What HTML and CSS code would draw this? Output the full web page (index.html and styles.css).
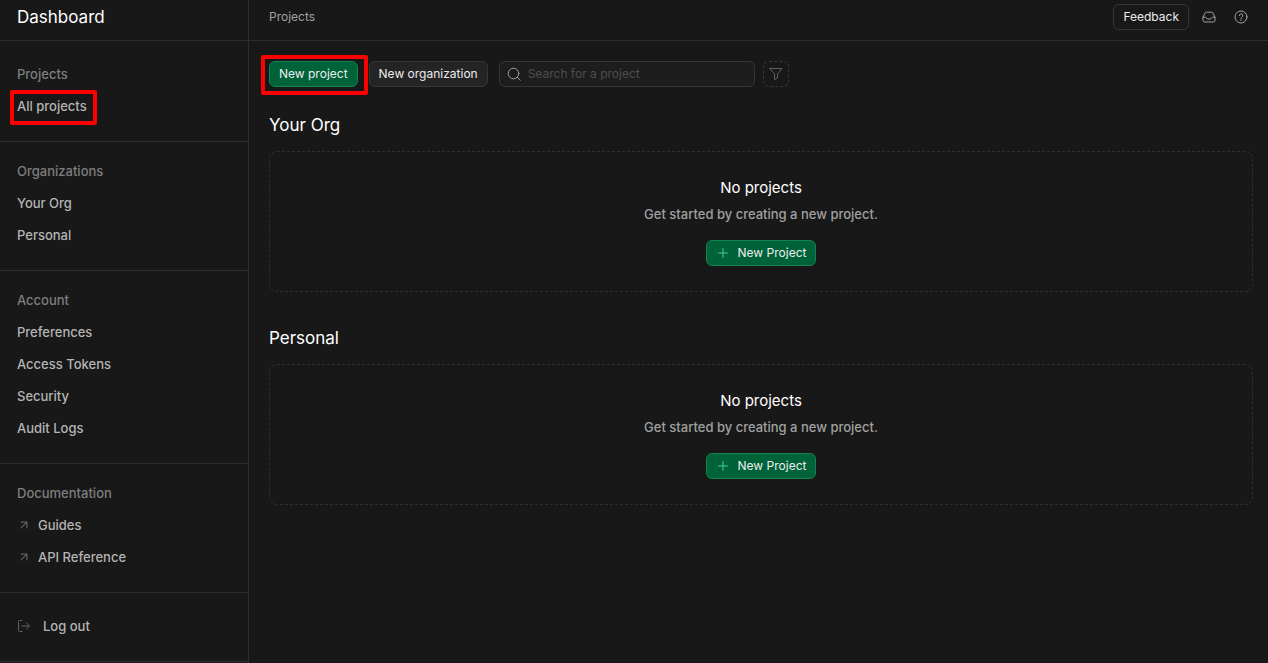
FILE: index.html
```html
<!DOCTYPE html>
<html lang="en">
<head>
<meta charset="utf-8">
<meta name="viewport" content="width=device-width, initial-scale=1">
<title>Projects</title>
<link rel="stylesheet" href="styles.css">
</head>
<body>
<div class="app">
  <aside class="sidebar">
    <div class="brand"><h1>Dashboard</h1></div>
    <nav>
      <section class="group group-edge">
        <h3>Projects</h3>
        <a href="#all"><span class="marked">All projects</span></a>
      </section>
      <section class="group">
        <h3>Organizations</h3>
        <a href="#org">Your Org</a>
        <a href="#personal">Personal</a>
      </section>
      <section class="group">
        <h3>Account</h3>
        <a href="#preferences">Preferences</a>
        <a href="#tokens">Access Tokens</a>
        <a href="#security">Security</a>
        <a href="#logs">Audit Logs</a>
      </section>
      <section class="group">
        <h3>Documentation</h3>
        <a class="doc" href="#guides"><svg viewBox="0 0 24 24"><path d="M7 17 17 7M7 7h10v10"/></svg>Guides</a>
        <a class="doc" href="#api"><svg viewBox="0 0 24 24"><path d="M7 17 17 7M7 7h10v10"/></svg>API Reference</a>
      </section>
      <section class="group group-edge">
        <button class="logout" type="button"><svg viewBox="0 0 14 14"><path d="M5 1.500H2.500a1 1 0 0 0-1 1v9a1 1 0 0 0 1 1H5M5 7h7.500M9.500 4l3 3-3 3"/></svg>Log out</button>
      </section>
    </nav>
  </aside>
  <div class="page">
    <header class="topbar">
      <a class="crumb" href="#projects">Projects</a>
      <div class="actions">
        <button class="btn outline" type="button">Feedback</button>
        <button class="icon-btn" type="button" aria-label="Inbox"><svg viewBox="0 0 14 14"><path d="M1 7.500 3 3q.4-.8 1.300-.8h5.400q.9 0 1.300.8l2 4.500v3q0 1.500-1.500 1.500h-9Q1 12 1 10.500zM1 7.200h2.600Q4.600 9.200 7 9.200t3.400-2H13"/></svg></button>
        <button class="icon-btn" type="button" aria-label="Help"><svg viewBox="0 0 14 14"><circle cx="7" cy="7" r="6"/><path d="M5.300 5.600a1.750 1.750 0 1 1 2.500 1.600q-.8.400-.8 1.200M7 9.700v.8"/></svg></button>
      </div>
    </header>
    <main>
      <div class="toolbar">
        <span class="marked-btn"><button class="btn green" type="button">New project</button></span>
        <button class="btn" type="button">New organization</button>
        <label class="search"><svg viewBox="0 0 14 14"><circle cx="6.500" cy="6.500" r="5.300"/><path d="m10.300 10.300 2.900 2.900"/></svg><input type="text" aria-label="Search for a project" placeholder="Search for a project"></label>
        <button class="filter" type="button" aria-label="Filter"><svg viewBox="0 0 14 14"><path d="M1 1.500h12L8.500 7.200V11l-3 1.700V7.200z"/></svg></button>
      </div>
      <section class="org">
        <h2>Your Org</h2>
        <div class="empty">
          <h4>No projects</h4>
          <p>Get started by creating a new project.</p>
          <button class="btn green add" type="button"><svg viewBox="0 0 14 14"><path d="M7 2.500v9M2.500 7h9"/></svg>New Project</button>
        </div>
      </section>
      <section class="org">
        <h2>Personal</h2>
        <div class="empty">
          <h4>No projects</h4>
          <p>Get started by creating a new project.</p>
          <button class="btn green add" type="button"><svg viewBox="0 0 14 14"><path d="M7 2.500v9M2.500 7h9"/></svg>New Project</button>
        </div>
      </section>
    </main>
  </div>
</div>
</body>
</html>
```
FILE: styles.css
```css
* { box-sizing: border-box; }
body {
  margin: 0;
  background: #181818;
  color: #ededed;
  font: 500 13px/20px Inter, "Liberation Sans", sans-serif;
}
h1, h2, h3, h4, p { margin: 0; font-weight: 400; }
a { color: inherit; text-decoration: none; }
button { font: inherit; color: inherit; }
svg {
  display: block;
  flex: none;
  width: 14px;
  height: 14px;
  fill: none;
  stroke: currentColor;
  stroke-width: 1;
  stroke-linecap: round;
  stroke-linejoin: round;
}
.app { display: flex; min-height: 100vh; }

.sidebar {
  flex: none;
  width: 249px;
  border-right: 1px solid #2e2e2e;
}
.brand {
  display: flex;
  align-items: center;
  height: 41px;
  padding: 0 17px 6px;
  border-bottom: 1px solid #2e2e2e;
}
.brand h1 { color: #fff; font-size: 17px; line-height: 24px; }
.group {
  padding: 13px 17px 19px;
  border-bottom: 1px solid #2e2e2e;
}
.group-edge { padding-top: 17px; }
.group h3 { color: #7e7e7e; font-size: 13px; font-weight: 500; line-height: 32px; }
.group a { display: block; color: #b4b4b4; line-height: 32px; }
.marked { position: relative; }
.marked::after {
  content: "";
  position: absolute;
  inset: -8px -10px -11px -7px;
  border: 4px solid #f00;
  border-radius: 2px;
}
.group .doc { display: flex; align-items: center; gap: 7px; }
.doc svg { color: #606060; stroke-width: 2; }
.logout {
  display: flex;
  align-items: center;
  gap: 12px;
  height: 32px;
  padding: 0;
  border: 0;
  background: none;
  color: #b4b4b4;
}
.logout svg { color: #606060; }

.page { flex: 1; min-width: 0; }
.topbar {
  display: flex;
  align-items: center;
  justify-content: space-between;
  height: 41px;
  padding: 0 20px 6px;
  border-bottom: 1px solid #2e2e2e;
}
.crumb { color: #a0a0a0; font-size: 12px; font-weight: 400; }
.actions { display: flex; align-items: center; gap: 13px; }
.icon-btn {
  padding: 0;
  border: 0;
  background: none;
  color: #a0a0a0;
}
.icon-btn + .icon-btn { margin-left: 5px; }
.btn {
  display: flex;
  align-items: center;
  justify-content: center;
  height: 26px;
  padding: 0 9px;
  border: 1px solid #363636;
  border-radius: 6px;
  background: #242424;
  color: #ededed;
  font-size: 12px;
  font-weight: 400;
  white-space: nowrap;
}
.outline { background: #181818; }
.green { border-color: #128353; background: #006239; color: #ededed; }

main { padding: 20px 15px 20px 20px; }
.toolbar { display: flex; align-items: center; gap: 11px; }
.marked-btn { position: relative; }
.marked-btn::after {
  content: "";
  position: absolute;
  inset: -6px -10px -8px -8px;
  border: 4px solid #f00;
  border-radius: 2px;
}
.search {
  display: flex;
  align-items: center;
  gap: 7px;
  width: 256px;
  height: 26px;
  padding: 0 7px;
  border: 1px solid #363636;
  border-radius: 6px;
  background: #1d1d1d;
  color: #a0a0a0;
}
.search input {
  flex: 1;
  min-width: 0;
  padding: 0;
  border: 0;
  outline: 0;
  background: none;
  color: #ededed;
  font: inherit;
  font-size: 12px;
  font-weight: 400;
}
.search input::placeholder { color: #4d4d4d; opacity: 1; }
.filter {
  display: flex;
  align-items: center;
  justify-content: center;
  width: 26px;
  height: 26px;
  margin-left: -3px;
  padding: 0;
  border: 1px dashed #363636;
  border-radius: 6px;
  background: none;
  color: #606060;
}
.org { margin-top: 26px; }
.org + .org { margin-top: 33px; }
.org h2 { color: #fff; font-size: 17px; line-height: 24px; }
.empty {
  display: flex;
  flex-direction: column;
  align-items: center;
  margin-top: 14px;
  padding: 24px 16px 25px;
  border: 1px dashed #2e2e2e;
  border-radius: 8px;
}
.org + .org { margin-top: 34px; }
.empty h4 { color: #fff; font-size: 15px; line-height: 24px; }
.empty p { margin-top: 4px; color: #a0a0a0; font-weight: 500; }
.add { gap: 8px; margin-top: 16px; }
.add svg { color: #3ecf8e; }
```
